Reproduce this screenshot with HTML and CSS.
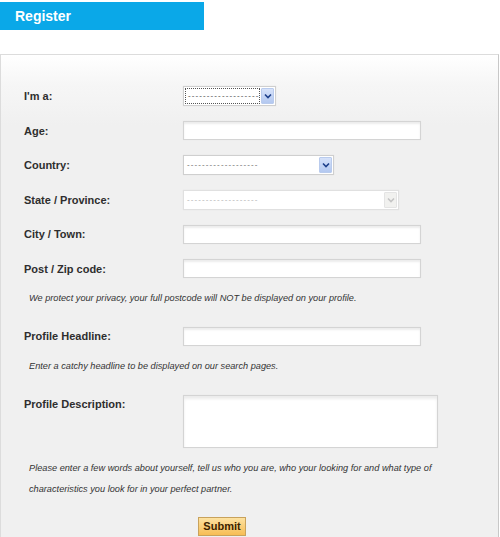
FILE: index.html
```html
<!DOCTYPE html>
<html>
<head>
<meta charset="utf-8">
<title>Register</title>
<link rel="stylesheet" href="styles.css">
</head>
<body>
<div class="header">Register</div>
<form class="panel">
  <div class="row">
    <label class="label">I'm a:</label>
    <div class="select select-sm focused">
      <span class="sel-text"><span class="focus-box">-------------------</span></span>
      <span class="arrow"><svg width="8" height="6" viewBox="0 0 8 6"><path d="M1 1.5 L4 4.5 L7 1.5" fill="none" stroke="#1d3f8a" stroke-width="1.6"/></svg></span>
    </div>
  </div>
  <div class="row">
    <label class="label">Age:</label>
    <div class="input w-std"></div>
  </div>
  <div class="row">
    <label class="label">Country:</label>
    <div class="select select-md">
      <span class="sel-text">-------------------</span>
      <span class="arrow"><svg width="8" height="6" viewBox="0 0 8 6"><path d="M1 1.5 L4 4.5 L7 1.5" fill="none" stroke="#1d3f8a" stroke-width="1.6"/></svg></span>
    </div>
  </div>
  <div class="row">
    <label class="label">State / Province:</label>
    <div class="select select-lg disabled">
      <span class="sel-text">-------------------</span>
      <span class="arrow"><svg width="8" height="6" viewBox="0 0 8 6"><path d="M1 1.5 L4 4.5 L7 1.5" fill="none" stroke="#c4c4c4" stroke-width="1.6"/></svg></span>
    </div>
  </div>
  <div class="row">
    <label class="label">City / Town:</label>
    <div class="input w-std"></div>
  </div>
  <div class="row">
    <label class="label">Post / Zip code:</label>
    <div class="input w-std"></div>
  </div>
  <p class="note">We protect your privacy, your full postcode will NOT be displayed on your profile.</p>
  <div class="row">
    <label class="label">Profile Headline:</label>
    <div class="input w-std"></div>
  </div>
  <p class="note">Enter a catchy headline to be displayed on our search pages.</p>
  <div class="row row-top">
    <label class="label label-top">Profile Description:</label>
    <div class="input textarea"></div>
  </div>
  <p class="note note-long">Please enter a few words about yourself, tell us who you are, who your looking for and what type of characteristics you look for in your perfect partner.</p>
  <div class="actions">
    <button type="button" class="submit">Submit</button>
  </div>
</form>
</body>
</html>
```
FILE: styles.css
```css
html, body {
  margin: 0;
  padding: 0;
  background: #fff;
  font-family: "Liberation Sans", Arial, sans-serif;
  color: #333;
}

.header {
  width: 189px;
  height: 28px;
  margin-top: 2px;
  padding-left: 15px;
  background: #0aa8e8;
  color: #fff;
  font-weight: bold;
  font-size: 14px;
  line-height: 29px;
}

.panel {
  display: flex;
  flex-direction: column;
  margin: 24px 0 0 0;
  width: 474px;
  height: 600px;
  border: 1px solid #dcdcdc;
  border-right-color: #c8c8c8;
  padding: 31px 0 0 23px;
  background: linear-gradient(#ffffff 0, #f6f6f6 30px, #f0f0f0 70px, #f0f0f0 100%);
}

.row {
  display: grid;
  grid-template-columns: 159px auto;
  align-items: center;
  height: 20px;
  flex: none;
}

.row + .row {
  margin-top: 14.6px;
}

.note + .row {
  margin-top: 17px;
}

.note + .row-top {
  margin-top: 18px;
}

.row-top {
  align-items: start;
  height: auto;
}

.label {
  font-size: 11px;
  font-weight: bold;
  color: #2e2e2e;
}

.label-top {
  padding-top: 3px;
}

.input {
  box-sizing: border-box;
  height: 19px;
  background: #fff;
  border: 1px solid #d4d4d4;
  box-shadow: inset 0 2px 2px #ececec, 0 0 1px #e6e6e6;
}

.w-std {
  width: 238px;
}

.textarea {
  width: 255px;
  height: 53px;
  box-shadow: inset 0 3px 3px #ececec, 0 0 1px #e6e6e6;
}

.select {
  box-sizing: border-box;
  height: 20px;
  display: flex;
  align-items: center;
  background: #fff;
  border: 1px solid #cfcfcf;
  box-shadow: 0 0 1px #e0e0e0;
  padding: 1px;
  font-size: 8px;
  color: #666;
  letter-spacing: 1.1px;
}

.select-sm { width: 93px; }
.select-md { width: 151px; }
.select-lg { width: 216px; }

.sel-text {
  flex: 1;
  padding-left: 2px;
  line-height: 16px;
  overflow: hidden;
  white-space: nowrap;
}

.focused .sel-text {
  padding-left: 0;
}

.focus-box {
  display: block;
  border: 1px dotted #555;
  padding-left: 2px;
  line-height: 14px;
  color: #444;
  margin-right: 1px;
}

.arrow {
  width: 13px;
  height: 16px;
  display: flex;
  align-items: center;
  justify-content: center;
  background: linear-gradient(#d6e2fa, #b3c8f0);
  border: 1px solid #b9cbed;
  box-sizing: border-box;
  border-radius: 1px;
}

.disabled {
  border-color: #e0e0e0;
  color: #b0b0b0;
}

.disabled .arrow {
  background: #f1f1ef;
  border-color: #e4e4e4;
}

.note {
  margin: 9.5px 0 0 5px;
  font-size: 9.2px;
  font-style: italic;
  line-height: 21px;
  color: #333;
  flex: none;
}

.note-long {
  margin-top: 10px;
  width: 420px;
}

.actions {
  padding-left: 174px;
  margin-top: 17px;
  flex: none;
}

.submit {
  display: block;
  width: 48px;
  height: 19px;
  padding: 0;
  border: 1px solid #c8a25c;
  background: linear-gradient(#fde2a1, #f7bd55);
  color: #3b1f00;
  font-family: "Liberation Sans", Arial, sans-serif;
  font-size: 11px;
  font-weight: bold;
  line-height: 17px;
}
```
